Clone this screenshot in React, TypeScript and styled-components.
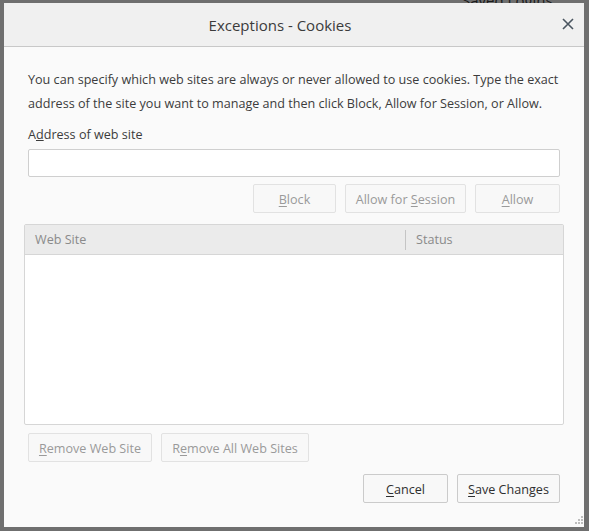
import styled, { createGlobalStyle } from "styled-components";

const GlobalStyle = createGlobalStyle`
  html, body {
    margin: 0;
    padding: 0;
    background: #6f6f6f;
    font-family: "Open Sans", "Noto Sans", sans-serif;
  }
  * { box-sizing: border-box; }
`;

const Backdrop = styled.div`
  position: relative;
  width: 589px;
  height: 531px;
  overflow: hidden;
  background: #6f6f6f;
`;

const BehindText = styled.div`
  position: absolute;
  left: 462px;
  top: -10px;
  color: #1a1a1a;
  font-size: 15px;
  white-space: nowrap;
`;

const Dialog = styled.div`
  position: absolute;
  left: 4px;
  top: 3px;
  width: 580px;
  height: 524px;
  background: #fafafa;
  display: flex;
  flex-direction: column;
`;

const TitleBar = styled.div`
  height: 44px;
  flex: none;
  background: #f0f0f0;
  border-bottom: 1px solid #c8c8c8;
  display: flex;
  align-items: center;
  justify-content: center;
  padding: 1px 28px 0 0;
  position: relative;
  color: #3b3b3b;
  font-size: 15px;
`;

const Close = styled.span`
  position: absolute;
  right: 8px;
  top: 13px;
  width: 16px;
  height: 16px;
  display: flex;
  align-items: center;
  justify-content: center;
`;

const Body = styled.div`
  flex: 1;
  padding: 21px 20px 0 20px;
  display: flex;
  flex-direction: column;
  font-size: 12.6px;
  color: #3c3c3c;
`;

const Description = styled.p`
  margin: 0 4px;
  line-height: 24px;
`;

const Label = styled.div`
  margin: 7px 4px 0;
  line-height: 24px;
`;

const Input = styled.div`
  margin: 2px 4px 0;
  height: 28px;
  background: #fff;
  border: 1px solid #cfcfcf;
  border-radius: 2px;
`;

const ButtonRow = styled.div<{ $align: "start" | "end"; $top: number }>`
  display: flex;
  justify-content: ${(p) => (p.$align === "end" ? "flex-end" : "flex-start")};
  gap: 9px;
  margin: ${(p) => p.$top}px 4px 0;
`;

const Button = styled.div<{ $w: number; $disabled?: boolean }>`
  width: ${(p) => p.$w}px;
  height: 29px;
  padding-top: 2px;
  border: 1px solid ${(p) => (p.$disabled ? "#e2e2e2" : "#cbcbcb")};
  border-radius: 2px;
  background: #f8f8f8;
  color: ${(p) => (p.$disabled ? "#9a9a9a" : "#2f2f2f")};
  display: flex;
  align-items: center;
  justify-content: center;
  font-size: 12.6px;
  u { text-underline-offset: 2px; }
`;

const Tree = styled.div`
  margin-top: 11px;
  height: 201px;
  border: 1px solid #d6d6d6;
  border-radius: 2px;
  background: #fff;
  display: flex;
  flex-direction: column;
`;

const TreeHead = styled.div`
  height: 30px;
  padding-top: 1px;
  background: #ebebeb;
  border-bottom: 1px solid #d6d6d6;
  display: grid;
  grid-template-columns: 380px 1fr;
  align-items: center;
  color: #8a8a8a;
`;

const Col = styled.div<{ $sep?: boolean }>`
  padding-left: 10px;
  height: 20px;
  line-height: 20px;
  border-left: ${(p) => (p.$sep ? "1px solid #c4c4c4" : "none")};
`;

const Grip = styled.svg`
  position: absolute;
  right: 1px;
  bottom: 3px;
`;

export default function App() {
  return (
    <>
      <GlobalStyle />
      <Backdrop>
        <BehindText>Saved Logins</BehindText>
        <Dialog>
          <TitleBar>
            Exceptions - Cookies
            <Close>
              <svg width="12" height="12" viewBox="0 0 12 12">
                <path d="M1 1L11 11M11 1L1 11" stroke="#4a5560" strokeWidth="1.6" />
              </svg>
            </Close>
          </TitleBar>
          <Body>
            <Description>
              You can specify which web sites are always or never allowed to use cookies. Type the exact
              address of the site you want to manage and then click Block, Allow for Session, or Allow.
            </Description>
            <Label>
              A<u>d</u>dress of web site
            </Label>
            <Input />
            <ButtonRow $align="end" $top={7}>
              <Button $w={83} $disabled>
                <span><u>B</u>lock</span>
              </Button>
              <Button $w={121} $disabled>
                <span>Allow for <u>S</u>ession</span>
              </Button>
              <Button $w={85} $disabled>
                <span><u>A</u>llow</span>
              </Button>
            </ButtonRow>
            <Tree>
              <TreeHead>
                <Col>Web Site</Col>
                <Col $sep>Status</Col>
              </TreeHead>
            </Tree>
            <ButtonRow $align="start" $top={8}>
              <Button $w={124} $disabled>
                <span><u>R</u>emove Web Site</span>
              </Button>
              <Button $w={148} $disabled>
                <span>R<u>e</u>move All Web Sites</span>
              </Button>
            </ButtonRow>
            <ButtonRow $align="end" $top={12}>
              <Button $w={85}>
                <span><u>C</u>ancel</span>
              </Button>
              <Button $w={103}>
                <span><u>S</u>ave Changes</span>
              </Button>
            </ButtonRow>
          </Body>
          <Grip width="8" height="8" viewBox="0 0 8 8">
            <rect x="6" y="0" width="2" height="2" fill="#bdbdbd" />
            <rect x="3" y="3" width="2" height="2" fill="#bdbdbd" />
            <rect x="6" y="3" width="2" height="2" fill="#bdbdbd" />
            <rect x="0" y="6" width="2" height="2" fill="#bdbdbd" />
            <rect x="3" y="6" width="2" height="2" fill="#bdbdbd" />
            <rect x="6" y="6" width="2" height="2" fill="#bdbdbd" />
          </Grip>
        </Dialog>
      </Backdrop>
    </>
  );
}
